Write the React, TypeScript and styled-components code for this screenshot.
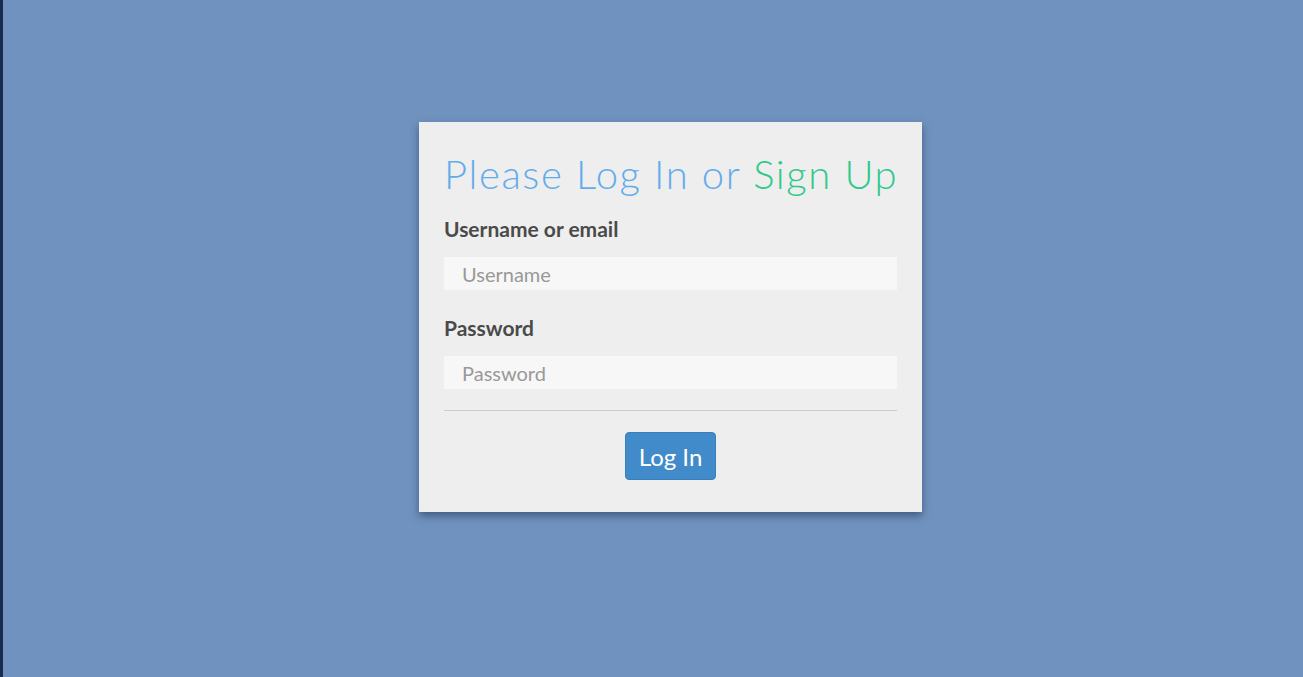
import React from "react";
import styled, { createGlobalStyle } from "styled-components";

const Global = createGlobalStyle`
  html, body { margin: 0; padding: 0; height: 100%; }
  body { background: #7092bf; font-family: Lato, "Open Sans", sans-serif; }
  #root { min-height: 100%; }
`;

const Page = styled.div`
  display: flex;
  min-height: 677px;
  box-sizing: border-box;
`;

const EdgeStrip = styled.div`
  width: 3px;
  flex: none;
  background: #1d2b4f;
`;

const Stage = styled.main`
  flex: 1;
  padding: 122px 0 0 416px;
`;

const Card = styled.section`
  width: 503px;
  box-sizing: border-box;
  background: #eeeeee;
  padding: 28px 25px 32px;
  box-shadow: 0 4px 8px rgba(30, 45, 80, 0.55);
`;

const Title = styled.h1`
  margin: 0 0 19px;
  font-family: Lato, sans-serif;
  font-weight: 300;
  font-size: 40px;
  line-height: 48px;
  letter-spacing: 1.6px;
  white-space: nowrap;
`;

const TitlePart = styled.span<{ $tone: "blue" | "green" }>`
  color: ${(p) => (p.$tone === "blue" ? "#62acec" : "#30c98b")};
`;

const Fields = styled.div`
  display: flex;
  flex-direction: column;
  gap: 26px;
`;

const Field = styled.div`
  display: flex;
  flex-direction: column;
`;

const Label = styled.label`
  font-family: Lato, sans-serif;
  font-weight: 700;
  font-size: 21px;
  line-height: 24px;
  color: #4a4a4a;
  margin-bottom: 16px;
`;

const Input = styled.input`
  height: 33px;
  box-sizing: border-box;
  border: none;
  outline: none;
  background: #f7f7f7;
  padding: 0 18px;
  font-family: Lato, sans-serif;
  font-size: 20px;
  color: #555;
  &::placeholder { color: #999; }
`;

const Divider = styled.hr`
  border: none;
  border-top: 1px solid #cccccc;
  margin: 21px 0 21px;
`;

const Actions = styled.div`
  display: flex;
  justify-content: center;
`;

const Button = styled.button`
  height: 48px;
  padding: 0 13px;
  border: 1px solid #3a7fbd;
  border-radius: 4px;
  background: #428bca;
  color: #fff;
  font-family: Lato, sans-serif;
  font-size: 24px;
  cursor: pointer;
`;

export default function App() {
  return (
    <>
      <Global />
      <Page>
        <EdgeStrip />
        <Stage>
          <Card>
            <Title>
              <TitlePart $tone="blue">Please Log In or </TitlePart>
              <TitlePart $tone="green">Sign Up</TitlePart>
            </Title>
            <Fields>
              <Field>
                <Label htmlFor="username">Username or email</Label>
                <Input id="username" placeholder="Username" />
              </Field>
              <Field>
                <Label htmlFor="password">Password</Label>
                <Input id="password" type="password" placeholder="Password" />
              </Field>
            </Fields>
            <Divider />
            <Actions>
              <Button>Log In</Button>
            </Actions>
          </Card>
        </Stage>
      </Page>
    </>
  );
}
